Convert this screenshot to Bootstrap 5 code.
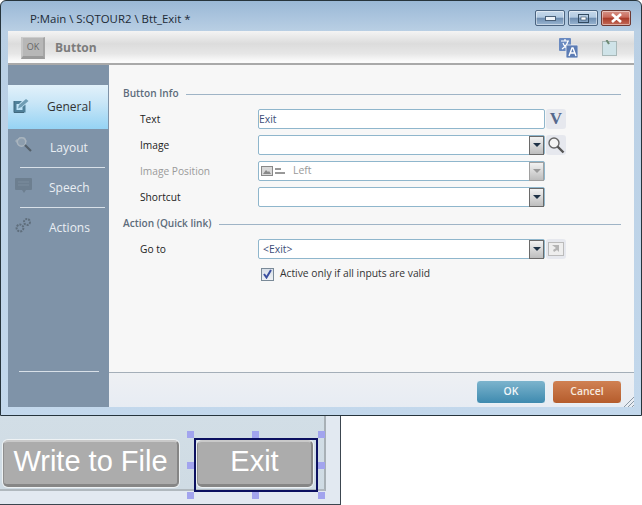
<!DOCTYPE html>
<html lang="en">
<head>
<meta charset="utf-8">
<title>Button</title>
<link href="https://cdn.jsdelivr.net/npm/bootstrap@5.3.0/dist/css/bootstrap.min.css" rel="stylesheet">
<style>
html,body{margin:0;padding:0;background:#fff;}
body{width:642px;height:505px;overflow:hidden;font-family:"Open Sans","Noto Sans",sans-serif;font-size:11px;color:#333;}
.win{width:642px;height:416px;border:1px solid #26343c;border-radius:6px 6px 0 0;background:linear-gradient(#9ab8d6 0,#b9cfe4 30px,#c3d8ec 100%);display:flex;flex-direction:column;}
.ttl{height:30px;padding-left:29px;padding-top:6px;font-size:11.4px;color:#1c2a36;}
.wbtns{gap:3px;padding:9px 10px 0 0;}
.wb{width:30px;height:16px;border:1px solid #4b6480;border-radius:2px;background:linear-gradient(#c6d8ea 0,#b3cbe2 45%,#6e8db0 50%,#9ab6d2 100%);box-shadow:inset 0 0 0 1px rgba(255,255,255,.45);display:flex;align-items:center;justify-content:center;}
.wbx{background:linear-gradient(#d69488 0,#c9695a 45%,#a83a28 50%,#c46a58 100%);border-color:#6e3a34;}
.inner{flex:1;margin:0 7px 8px 7px;display:flex;flex-direction:column;background:#f7f7f7;min-height:0;}
.hdr{height:34px;background:linear-gradient(#f4f4f4 0,#dcdcdc 40%,#e6e6e6 70%,#fbfbfb 95%);border-bottom:2px solid #a9a9a9;padding:2px 17px 0 13px;}
.okic{width:24px;height:22px;background:#b7b7b7;border-top:1px solid #ccc;border-bottom:3px solid #9a9a9a;border-left:2px solid #c6c6c6;border-right:2px solid #a5a5a5;color:#666;font-size:9px;line-height:18px;text-align:center;margin-right:10px;}
.hname{font-weight:700;font-size:12px;color:#7c7c7c;}
.body{flex:1;min-height:0;}
.side{width:101px;background:#7f93a8;display:flex;flex-direction:column;padding-top:20px;flex:none;}
.tabon{height:44px;width:100px;background:linear-gradient(#e2f1fa 0,#c9e6f7 40%,#95d3f4 100%);color:#333;font-size:12px;padding-left:39px;position:relative;display:flex;align-items:center;}
.tabx{color:#e9eef3;font-size:12px;position:relative;display:flex;align-items:center;}
.tabx svg,.tabon svg{position:absolute;}
.sdiv{height:1px;background:#d8e0e8;margin-left:12px;margin-right:4px;}
.sdivb{margin:124px 10px 0 11px;}
.main{flex:1;display:flex;flex-direction:column;min-width:0;}
.pane{flex:1;padding:22px 13px 0 14px;}
.sect{height:14px;font-weight:600;color:#5d6c7b;font-size:10.1px;margin-bottom:8px;display:flex;align-items:center;gap:7px;}
.sect i{flex:1;height:1px;background:#9fb4c6;display:block;}
.frow{height:20px;display:flex;align-items:center;margin-bottom:6px;}
.frow4{margin-bottom:10px;}
.frow5{margin-bottom:8px;}
.flab{width:135px;padding-left:17px;padding-top:1px;color:#222;font-size:10.2px;}
.flab.off{color:#9a9a9a;}
.fbox{width:287px;height:20px;background:#fff;border:1px solid #8fb6cc;border-radius:2px;display:flex;align-items:center;padding:0;color:#3d4d78;font-size:10.4px;}
.fbox span.v{flex:1;padding-top:1px;}
.left{color:#999;padding-left:8px;padding-top:0!important;}
.dd{width:15px;height:19px;margin:0;border:1px solid #6a6a6a;background:linear-gradient(#f2f2f2,#bdbdbd);display:flex;align-items:center;justify-content:center;flex:none;}
.dd::before{content:"";border-left:4px solid transparent;border-right:4px solid transparent;border-top:4px solid #1f3246;}
.dd.off{border-color:#a0a0a0;}
.dd.off::before{border-top-color:#9a9a9a;}
.sbtn{width:20px;height:20px;margin-left:1px;background:#e6e8ee;border-radius:3px;display:flex;align-items:center;justify-content:center;}
.vv{font-family:"Liberation Serif",serif;font-weight:700;font-size:17px;color:#55688c;line-height:20px;}
.imic{margin-left:2px;}
.chkrow{height:14px;margin:0 0 0 135px;padding-left:3px;display:flex;align-items:center;gap:6px;color:#333;font-size:10.3px;}
.cbx{width:13px;height:13px;border:1px solid #7a8a98;background:linear-gradient(#d8dfe8,#eef1f5);display:flex;align-items:center;justify-content:center;}
.foot{height:35px;border-top:1px solid #a4aeb8;background:linear-gradient(#eef0f3,#e7ecf3);padding:7px 12px 0 0;gap:6px;}
.fb{width:70px;height:24px;border:1px solid #e8f0f6;border-radius:4px;color:#fff;font-weight:600;font-size:10.4px;padding:0;line-height:21px;text-align:center;}
.fb.k{background:linear-gradient(#7cb4cd,#3e8aaf);color:#f2f7fa;}
.fb.c{background:linear-gradient(#d08153,#b55c2c);color:#f7e9df;}
.grip{position:absolute;right:0;bottom:0;}
.lower{width:341px;height:89px;position:relative;background:#e2e9f1;border-right:1px solid #3c4650;border-bottom:1px solid #3c4650;}
.cv{width:326px;height:75px;background:linear-gradient(#d2dee6,#cfdbe4);border-right:2px solid #a8b0b6;border-bottom:2px solid #b0b8be;padding:24px 0 0 3px;display:flex;gap:18px;align-items:flex-start;}
.rbtn{height:47px;border-radius:5px;background:#acacac;color:#fff;font-family:"Liberation Sans",sans-serif;border:1px solid #8f8f8f;border-bottom:3px solid #868686;border-right:2px solid #858585;border-top:2px solid #c9c9c9;box-shadow:0 0 0 1px #eef2f4;font-size:29px;line-height:38px;text-align:center;}
.r1{width:176px;}
.r2{width:116px;}
.selbox{position:absolute;left:194px;top:22px;width:124px;height:54px;border:2px solid #0b1060;}
.hd{position:absolute;width:7px;height:7px;background:#a2a4ee;}
.hx1{left:187px;}.hx2{left:252px;}.hx3{left:318px;}
.hy1{top:15px;}.hy2{top:46px;}.hy3{top:76px;}
.ic1{left:5px;top:13px;}.ic2{left:7px;top:7px;}.ic3{left:7px;top:10px;}.ic4{left:7px;top:9px;}
.t2{height:38px;padding-left:42px;}.t3{height:39px;padding-left:41px;}
</style>
</head>
<body>
<div class="win">
  <div class="d-flex justify-content-between">
    <div class="ttl d-flex align-items-center">P:Main \ S:QTOUR2 \ Btt_Exit *</div>
    <div class="wbtns d-flex">
      <div class="wb"><svg width="11" height="5"><rect x=".5" y=".5" width="10" height="4" fill="#eef3f8" stroke="#4a6078"/></svg></div>
      <div class="wb"><svg width="11" height="9"><rect x=".5" y=".5" width="10" height="8" fill="none" stroke="#324a60"/><rect x="3" y="3" width="5" height="3" fill="#fff" stroke="#324a60" stroke-width=".6"/></svg></div>
      <div class="wb wbx"><svg width="13" height="10"><path d="M2 1l9 8M11 1l-9 8" stroke="#fff" stroke-width="2.6"/></svg></div>
    </div>
  </div>
  <div class="inner">
    <div class="hdr d-flex align-items-center">
      <div class="okic">OK</div>
      <div class="hname flex-grow-1">Button</div>
      <svg class="me-4" width="19" height="20" viewBox="0 0 19 20"><rect x="0" y="0" width="12" height="13" rx="1" fill="#6a8ac0"/><path d="M2 3h8M6 1v2M3 11c3-2 5-4 6-8M4 5c1 3 3 5 6 6" stroke="#fff" stroke-width="1.2" fill="none"/><rect x="7" y="7" width="12" height="13" rx="1" fill="#5c7cb4" stroke="#eef1f6" stroke-width=".8"/><path d="M10 18l3-8h1l3 8M11.500 15h4" stroke="#fff" stroke-width="1.400" fill="none"/></svg>
      <svg width="15" height="16" viewBox="0 0 15 16"><rect x=".5" y="1.500" width="14" height="14" fill="#cfe3e8" stroke="#a8b8b8"/><path d="M4.500 0l2.500 4" stroke="#6e8a74" stroke-width="2"/></svg>
    </div>
    <div class="body d-flex">
      <nav class="side">
        <div class="tabon"><svg class="ic1" width="16" height="15" viewBox="0 0 16 15"><path d="M1 3h8L6 6H3.500v6h6V9l3-2.500V14.500H1z" fill="#4f8099"/><path d="M5 10.500l1-3.500 7-6 2.500 2-7 6z" fill="#6f9db4"/><path d="M1 3v11.500h10" fill="none" stroke="#41697e"/></svg>General</div>
        <div class="tabx t2"><svg class="ic2" width="18" height="17" viewBox="0 0 18 17"><path d="M1 4h3V2h6v2h1v2H1z" fill="#93a3b2" stroke="#aab5bf" stroke-width=".8"/><circle cx="6.500" cy="6" r="4.200" fill="#8d9eae" stroke="#a9b4be" stroke-width="1.400"/><path d="M10 9l6 6" stroke="#55606a" stroke-width="2.200"/></svg>Layout</div>
        <div class="sdiv"></div>
        <div class="tabx t3"><svg class="ic3" width="17" height="16" viewBox="0 0 17 16"><path d="M1 0h15a1 1 0 0 1 1 1v10a1 1 0 0 1-1 1h-5l-2 3-2-3H1a1 1 0 0 1-1-1V1a1 1 0 0 1 1-1z" fill="#6d7f90"/><path d="M3 4h11M3 7h11" stroke="#7d8e9e"/></svg>Speech</div>
        <div class="sdiv"></div>
        <div class="tabx t3"><svg class="ic4" width="17" height="17" viewBox="0 0 17 17"><circle cx="12" cy="5" r="3" fill="none" stroke="#5f6e7c" stroke-width="2" stroke-dasharray="2 1"/><circle cx="5" cy="11" r="3.400" fill="none" stroke="#5f6e7c" stroke-width="2" stroke-dasharray="2 1"/></svg>Actions</div>
        <div class="sdiv sdivb"></div>
      </nav>
      <div class="main">
        <div class="pane">
          <div class="sect">Button Info<i></i></div>
          <div class="frow"><div class="flab">Text</div><div class="fbox"><span class="v">Exit</span></div><div class="sbtn"><span class="vv">V</span></div></div>
          <div class="frow"><div class="flab">Image</div><div class="fbox"><span class="v"></span><span class="dd"></span></div><div class="sbtn"><svg width="18" height="18" viewBox="0 0 18 18"><circle cx="7" cy="7" r="5" fill="#f4f4f4" stroke="#666" stroke-width="1.400"/><path d="M10.500 10.500l6 6" stroke="#555" stroke-width="2.400"/></svg></div></div>
          <div class="frow"><div class="flab off">Image Position</div><div class="fbox"><svg class="imic" width="24" height="10" viewBox="0 0 24 10"><rect x=".5" y=".5" width="11" height="9" fill="#d8d8d8" stroke="#888"/><path d="M2 8l3-4 2 2 1-1 2 3z" fill="#888"/><path d="M14 3h6M14 7h10" stroke="#333"/></svg><span class="v left">Left</span><span class="dd off"></span></div></div>
          <div class="frow frow4"><div class="flab">Shortcut</div><div class="fbox"><span class="v"></span><span class="dd"></span></div></div>
          <div class="sect">Action (Quick link)<i></i></div>
          <div class="frow frow5"><div class="flab">Go to</div><div class="fbox"><span class="v ps-1">&lt;Exit&gt;</span><span class="dd"></span></div><div class="sbtn"><svg width="16" height="14" viewBox="0 0 16 14"><rect x=".5" y=".5" width="15" height="13" fill="#eee" stroke="#bbb"/><path d="M4 3h7v7l-2-2-3 2-1-2 3-2z" fill="#b4b4b4"/></svg></div></div>
          <div class="chkrow"><span class="cbx"><svg width="9" height="10" viewBox="0 0 9 10"><path d="M1 5l2.500 3.500L8 1" stroke="#3a4fa0" stroke-width="2" fill="none"/></svg></span>Active only if all inputs are valid</div>
        </div>
        <div class="foot d-flex justify-content-end position-relative">
          <div class="fb k">OK</div><div class="fb c">Cancel</div>
          <svg class="grip" width="11" height="11" viewBox="0 0 11 11"><path d="M1 11L11 1M5 11L11 5M9 11l2-2" stroke="#8b98a4"/></svg>
        </div>
      </div>
    </div>
  </div>
</div>
<div class="lower">
  <div class="cv"><div class="rbtn r1">Write to File</div><div class="rbtn r2">Exit</div></div>
  <div class="selbox"></div>
  <div class="hd hx1 hy1"></div><div class="hd hx2 hy1"></div><div class="hd hx3 hy1"></div>
  <div class="hd hx1 hy2"></div><div class="hd hx3 hy2"></div>
  <div class="hd hx1 hy3"></div><div class="hd hx2 hy3"></div><div class="hd hx3 hy3"></div>
</div>
<script src="https://cdn.jsdelivr.net/npm/bootstrap@5.3.0/dist/js/bootstrap.bundle.min.js"></script>
</body>
</html>
